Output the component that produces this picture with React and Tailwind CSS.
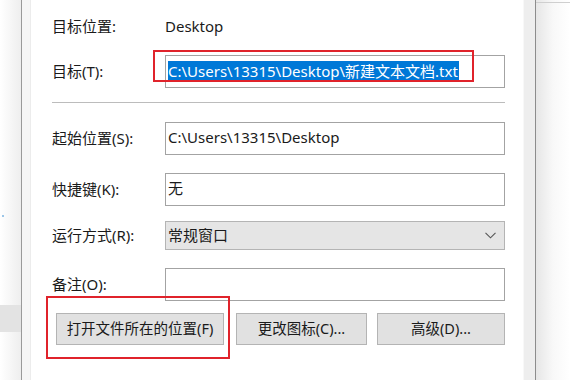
import React from "react";

const font = { fontFamily: '"Noto Sans", "Noto Sans CJK SC", sans-serif' };

const Label = ({ children }) => (
  <div className="w-[113px] shrink-0 text-[15px] text-[#1a1a1a]">{children}</div>
);

const Field = ({ children, className = "" }) => (
  <div
    className={`flex-1 h-[33px] flex items-center pl-[2px] pb-[2px] border border-[#a3a3a3] bg-white text-[15px] text-[#1a1a1a] ${className}`}
  >
    {children}
  </div>
);

const Button = ({ children, className = "" }) => (
  <div
    className={`h-[32px] flex items-center justify-center border border-[#b4b4b4] bg-[#e1e1e1] text-[14.5px] text-[#1a1a1a] ${className}`}
  >
    {children}
  </div>
);

const App = () => {
  return (
    <div className="w-[570px] h-[380px] flex bg-white overflow-hidden" style={font}>
      {/* left window behind */}
      <div className="w-[21px] shrink-0 flex flex-col bg-gradient-to-r from-white to-[#eeeeee]">
        <div className="h-[215px]" />
        <div className="ml-[2px] w-[2px] h-[2px] bg-[#9cc6e8]" />
        <div className="h-[88px]" />
        <div className="h-[27px] bg-[#e3e3e3]" />
      </div>
      <div className="w-px shrink-0 bg-[#9a9a9a]" />
      <div className="w-[9px] shrink-0 bg-[#f6f6f6] border-r border-[#ececec]" />

      {/* dialog content */}
      <div className="relative w-[492px] shrink-0 flex flex-col pl-[21px] pr-[18px]">
        <div className="mt-[10px] h-[33px] flex items-center">
          <Label>目标位置:</Label>
          <div className="text-[15px] text-[#1a1a1a]">Desktop</div>
        </div>

        <div className="mt-[12px] flex items-center">
          <Label>目标(T):</Label>
          <Field className="border-[#6f9fd3] text-[14.7px]">
            <span className="bg-[#0078d7] text-white leading-[20px] pr-[1px]">
              C:\Users\13315\Desktop\新建文本文档.txt
            </span>
          </Field>
        </div>

        <div className="mt-[14px] h-px bg-[#bcbcbc]" />

        <div className="mt-[19px] flex items-center">
          <Label>起始位置(S):</Label>
          <Field>C:\Users\13315\Desktop</Field>
        </div>

        <div className="mt-[18px] flex items-center">
          <Label>快捷键(K):</Label>
          <Field>无</Field>
        </div>

        <div className="mt-[15px] flex items-center">
          <Label>运行方式(R):</Label>
          <div className="flex-1 h-[29px] flex items-center justify-between pl-[2px] pr-[8px] border border-[#b4b4b4] bg-[#e5e5e5] text-[15px] text-[#1a1a1a]">
            <span>常规窗口</span>
            <svg width="11" height="7" viewBox="0 0 11 7" fill="none">
              <path d="M0.5 0.8 L5.5 5.8 L10.5 0.8" stroke="#555" strokeWidth="1.1" />
            </svg>
          </div>
        </div>

        <div className="mt-[18px] flex items-center">
          <Label>备注(O):</Label>
          <Field />
        </div>

        <div className="mt-[12px] flex items-center">
          <Button className="ml-[4px] w-[168px]">打开文件所在的位置(F)</Button>
          <Button className="ml-[12px] w-[131px]">更改图标(C)...</Button>
          <Button className="ml-[10px] w-[128px]">高级(D)...</Button>
        </div>

        {/* red highlight boxes */}
        <div className="absolute left-[122px] top-[50px] w-[321px] h-[32px] border-2 border-[#e0232b]" />
        <div className="absolute left-[15px] top-[296px] w-[184px] h-[63px] border-2 border-[#e0232b]" />
      </div>

      {/* right frame */}
      <div className="w-[12px] shrink-0 bg-[#eeeeee] border-l border-[#f8f8f8]" />
      <div className="w-px shrink-0 bg-[#8c8c8c]" />
      <div className="flex-1 flex flex-col bg-gradient-to-r from-[#e6e6e6] via-[#f8f8f8] to-white">
        <div className="mt-[2px] h-px bg-[#cfcfcf]" />
      </div>
    </div>
  );
};

export default App;
